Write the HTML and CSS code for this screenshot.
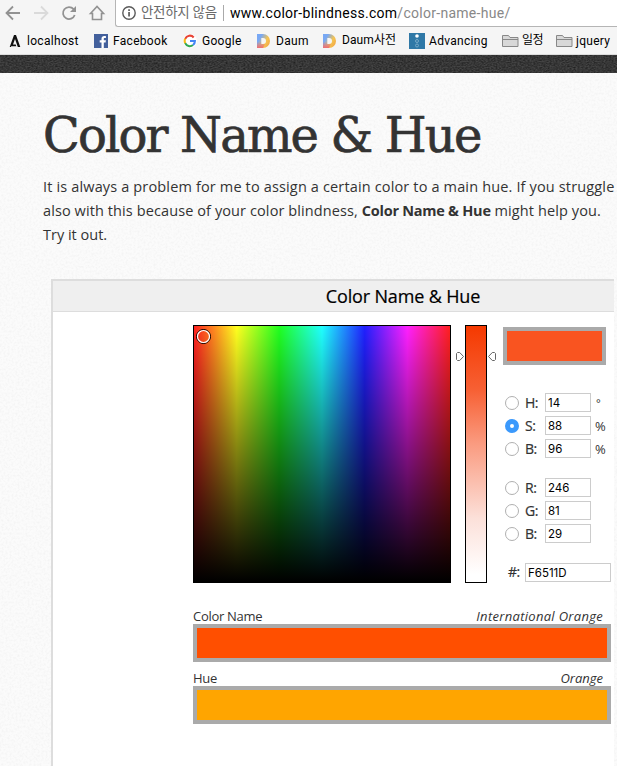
FILE: index.html
```html
<!DOCTYPE html>
<html lang="en">
<head>
<meta charset="utf-8">
<title>Color Name &amp; Hue</title>
<link rel="stylesheet" href="styles.css">
</head>
<body>
<header class="chrome">
  <div class="toolbar">
    <svg class="nav" width="112" height="27" viewBox="0 0 112 27" fill="none" stroke-width="1.8">
      <path d="M20 13H7M13 6.500 6.500 13l6.500 6.500" stroke="#929292"/>
      <path d="M34 13h13M41 6.500 47.500 13 41 19.500" stroke="#dadada"/>
      <path d="M73.600 9.200A6 6 0 1 0 74.700 15" stroke="#929292"/>
      <path d="M76 6v6h-6z" fill="#929292"/>
      <path d="M90.500 13.500 97 6.500l6.500 7h-2v6H92.500v-6z" stroke="#929292" stroke-width="1.600"/>
    </svg>
    <div class="address">
      <svg class="info" width="14" height="14" viewBox="0 0 14 14"><circle cx="7" cy="7" r="6.200" fill="none" stroke="#5a5a5a" stroke-width="1.400"/><path d="M6.200 6h1.700v4.500H6.200zM6.200 3.300h1.700V5H6.200z" fill="#5a5a5a"/></svg>
      <span class="insecure">안전하지 않음</span>
      <span class="divider"></span>
      <span class="url">www.color-blindness.com<span class="path">/color-name-hue/</span></span>
    </div>
  </div>
  <nav class="bookmarks">
    <a class="bm bm-local"><svg width="12" height="14" viewBox="0 0 12 14"><path d="M5 1h2l4.300 12H8.800L6 5 4 10.500h2.700l.6 1.700H2.200l-.3.800H.7z" fill="#111"/></svg><span>localhost</span></a>
    <a class="bm bm-fb"><svg width="14" height="14" viewBox="0 0 14 14"><path d="M0 0h14v14H0z" fill="#43609c"/><path d="M7.500 14V8.500H5.700V6.300h1.800V4.700C7.500 2.800 8.600 2 10.200 2h1.700v2h-1.100c-.8 0-1 .4-1 1v1.300h2.100l-.3 2.200H9.800V14z" fill="#fff"/></svg><span>Facebook</span></a>
    <a class="bm bm-google"><svg width="14" height="14" viewBox="0 0 14 14"><circle cx="7" cy="7" r="7" fill="#fff"/><g fill="none" stroke-width="2.100"><path d="M2.200 4.800A5 5 0 0 1 10.700 3.500" stroke="#e84436"/><path d="M2.200 9.200a5 5 0 0 1 0-4.400" stroke="#f6ba15"/><path d="M10 11A5 5 0 0 1 2.200 9.200" stroke="#34a853"/><path d="M7 7h4.900a5 5 0 0 1-1.900 4" stroke="#4285f4"/></g></svg><span>Google</span></a>
    <a class="bm bm-daum"><svg width="14" height="14" viewBox="0 0 14 14"><defs><linearGradient id="dg" x1="0" x2="1" y1=".2" y2=".8"><stop offset=".2" stop-color="#78a8f4"/><stop offset=".65" stop-color="#f5c451"/><stop offset="1" stop-color="#f2a543"/></linearGradient><linearGradient id="dr" x1="0" x2="0" y1="0" y2="1"><stop offset=".55" stop-color="#ee6c73" stop-opacity="0"/><stop offset="1" stop-color="#ee6c73"/></linearGradient></defs><path d="M0 0h6a7 7 0 0 1 0 14H0zM4.300 4v6H6a3 3 0 0 0 0-6z" fill="url(#dg)" fill-rule="evenodd"/><path d="M0 0h4.300v10H8l-2 4H0z" fill="url(#dr)"/></svg><span>Daum</span></a>
    <a class="bm bm-dict"><svg width="14" height="14" viewBox="0 0 14 14"><path d="M0 0h6a7 7 0 0 1 0 14H0zM4.300 4v6H6a3 3 0 0 0 0-6z" fill="url(#dg)" fill-rule="evenodd"/><path d="M0 0h4.300v10H8l-2 4H0z" fill="url(#dr)"/></svg><span>Daum사전</span></a>
    <a class="bm bm-adv"><svg width="16" height="16" viewBox="0 0 16 16"><path d="M0 0h16v16H0z" fill="#2f78a6"/><circle cx="8" cy="3" r="1.800" fill="#fff"/><g fill="none" stroke="#77a9c7"><circle cx="8" cy="8" r="1.500"/><circle cx="8" cy="12.500" r="1.500"/></g></svg><span>Advancing</span></a>
    <a class="bm bm-folder1"><svg width="17" height="14" viewBox="0 0 17 14"><path d="M.5 12.500v-11h6l1.500 2h8v9zM.5 5.500h15.500" fill="#d8d8d8" stroke="#888"/></svg><span>일정</span></a>
    <a class="bm bm-folder2"><svg width="17" height="14" viewBox="0 0 17 14"><path d="M.5 12.500v-11h6l1.500 2h8v9zM.5 5.500h15.500" fill="#d8d8d8" stroke="#888"/></svg><span>jquery</span></a>
  </nav>
</header>
<div class="band"><svg class="texture" width="617" height="18"><filter id="dark" x="0" y="0" width="1" height="1"><feTurbulence type="fractalNoise" baseFrequency=".5 .8" numOctaves="2" seed="4"/><feColorMatrix values="0 0 0 0 0  0 0 0 0 0  0 0 0 0 0  .9 0 0 0 -.25"/></filter><rect width="617" height="18" filter="url(#dark)"/></svg></div>
<main class="page">
  <svg class="texture" width="617" height="693"><filter id="paper" x="0" y="0" width="1" height="1"><feTurbulence type="fractalNoise" baseFrequency=".5 .45" numOctaves="2" seed="8"/><feColorMatrix values="0 0 0 0 .4  0 0 0 0 .4  0 0 0 0 .4  .2 0 0 0 -.08"/></filter><rect width="617" height="693" filter="url(#paper)"/></svg>
  <h1>Color Name &amp; Hue</h1>
  <p class="intro"><span class="l1">It is always a problem for me to assign a certain color to a main hue. If you struggle</span><br><span class="l2">also with this because of your color blindness, <b>Color Name &amp; Hue</b> might help you.</span><br><span class="l3">Try it out.</span></p>
  <section class="panel">
    <h2><span>Color Name &amp; Hue</span></h2>
    <div class="tool">
      <div class="picker">
        <div class="field"><svg class="cursor" width="15" height="15" viewBox="0 0 15 15" fill="none"><circle cx="7.500" cy="7.500" r="7" stroke="#000"/><circle cx="7.500" cy="7.500" r="6" stroke="#fff" stroke-width="1.200"/></svg></div>
        <div class="slider">
          <svg class="arrow left" width="8" height="9" viewBox="0 0 8 9"><path d="M1.500.5h2.200l3.800 4-3.800 4H1.500L.5 7.500v-6z" fill="#fff" stroke="#666"/></svg>
          <svg class="arrow right" width="8" height="9" viewBox="0 0 8 9"><path d="M6.500.5H4.300l-3.800 4 3.800 4h2.200l1-1v-6z" fill="#fff" stroke="#666"/></svg>
        </div>
        <div class="values">
          <div class="preview"></div>
          <div class="group">
            <label class="row"><i class="radio"></i><span class="name">H:</span><span class="box">14</span><span class="unit degree">°</span></label>
            <label class="row"><i class="radio on"></i><span class="name">S:</span><span class="box">88</span><span class="unit">%</span></label>
            <label class="row"><i class="radio"></i><span class="name">B:</span><span class="box">96</span><span class="unit">%</span></label>
          </div>
          <div class="group">
            <label class="row"><i class="radio"></i><span class="name">R:</span><span class="box">246</span></label>
            <label class="row"><i class="radio"></i><span class="name">G:</span><span class="box">81</span></label>
            <label class="row"><i class="radio"></i><span class="name">B:</span><span class="box">29</span></label>
          </div>
          <div class="hex"><span class="name">#:</span><span class="box">F6511D</span></div>
        </div>
      </div>
      <div class="result"><div class="caption"><span class="cn">Color Name</span><em class="io">International Orange</em></div><div class="bar name-bar"></div></div>
      <div class="result"><div class="caption"><span class="cn">Hue</span><em>Orange</em></div><div class="bar hue-bar"></div></div>
    </div>
  </section>
</main>
</body>
</html>
```
FILE: styles.css
```css
* { box-sizing: border-box; }
body { margin: 0; width: 617px; height: 766px; overflow: hidden; background: #fbfbfb; color: #333; font-family: "Open Sans", "Noto Sans CJK KR", sans-serif; }
svg { display: block; flex: none; }
.chrome { height: 55px; background: #f5f5f5; border-bottom: 1px solid #ddd; color: #000; font-family: Roboto, "Noto Sans CJK KR", sans-serif; white-space: nowrap; }
.toolbar { display: flex; height: 27px; }
.address { display: flex; align-items: center; flex: 1; margin-left: 3px; height: 27px; padding-left: 6px; background: #fff; border: 1px solid #b5b5b5; border-width: 0 0 1px 1px; border-radius: 0 0 0 3px; }
.insecure { margin-left: 5px; width: 77px; font-size: 13.500px; line-height: 20px; margin-top: -2px; letter-spacing: -.3px; color: #6a6a6a; }
.divider { width: 1px; height: 16px; margin: 0 6px 0 5px; background: #aaa; }
.url { font-size: 14px; letter-spacing: .28px; }
.path { color: #888; }
.bookmarks { display: flex; height: 27px; padding-left: 9px; }
.bm { display: flex; align-items: center; gap: 6px; font-size: 12px; letter-spacing: .3px; }
.bm span { height: 16px; line-height: 16px; }
.bm-local { width: 85px; }
.bm-fb { width: 89px; gap: 5px; }
.bm-google { width: 74px; gap: 5px; }
.bm-daum { width: 66px; gap: 5px; }
.bm-dict { width: 86px; gap: 5px; }
.bm-dict span { letter-spacing: .1px; margin-top: -2px; }
.bm-adv { width: 93px; gap: 4px; }
.bm-folder1 { width: 54px; gap: 3px; }
.bm-folder1 span { margin-top: -2px; letter-spacing: -.5px; }
.bm-folder2 { gap: 3px; }
.band { position: relative; height: 18px; background: #444; }
.texture { position: absolute; top: 0; left: 0; }
.page { position: relative; height: 693px; padding: 31px 0 0 43px; }
h1, .intro, .panel { position: relative; }
h1 { margin: 0; height: 61px; font: 400 48px/62px "DejaVu Serif", serif; letter-spacing: -1.850px; white-space: nowrap; -webkit-text-stroke: .7px #333; }
.intro { margin: 10px 0 0; font-size: 14.500px; line-height: 24px; white-space: nowrap; }
.l1 { letter-spacing: .15px; }
.l2 { letter-spacing: .1px; }
.l2 b { letter-spacing: -.250px; }
.panel { margin: 32px 0 0 8px; width: 563px; height: 500px; overflow: hidden; background: #fff; border: 2px solid #ddd; border-right: 0; }
h2 { margin: 0; width: 700px; height: 31px; background: #efefef; border-bottom: 1px solid #ddd; color: #000; font-size: 18px; font-weight: 400; line-height: 30px; letter-spacing: -.150px; text-align: center; -webkit-text-stroke: .2px #000; }
.tool { width: 418px; margin: 13px 0 0 140px; }
.picker { display: flex; height: 258px; }
.field { position: relative; width: 258px; border: 1px solid #000; background: linear-gradient(transparent, #000), linear-gradient(90deg, #ff2020, #ffff20 16.667%, #20ff20 33.333%, #20ffff 50%, #2020ff 66.667%, #ff20ff 83.333%, #ff2020); }
.cursor { position: absolute; left: 2px; top: 3px; }
.slider { position: relative; width: 22px; margin-left: 14px; border: 1px solid #000; background: linear-gradient(#f53900, #f76034 25%, #fa9b80 46%, #fce0d9 75%, #fff 97%); }
.arrow { position: absolute; top: 26px; }
.arrow.left { left: -10px; }
.arrow.right { left: 22px; }
.values { display: flex; flex-direction: column; width: 108px; margin-left: 16px; padding-top: 2px; }
.preview { width: 103px; height: 38px; border: 4px solid #aaa; background: #f95420; }
.group { display: flex; flex-direction: column; gap: 4px; margin-top: 28px; }
.group + .group { margin-top: 20px; }
.row { display: flex; align-items: center; height: 19px; padding-left: 2px; font-size: 14px; }
.radio { width: 14px; height: 14px; border: 1px solid #b0b0b0; border-radius: 50%; background: #fff; }
.radio.on { border: 5px solid #3b99fc; }
.name { width: 20px; margin-left: 6px; font-size: 14px; line-height: 18px; letter-spacing: -.5px; -webkit-text-stroke: .2px #333; }
.box { width: 46px; height: 19px; padding-left: 2px; border: 1px solid #ccc; background: #fff; color: #000; font: 11.500px/18px Inter, sans-serif; }
.unit { margin-left: 4px; font-size: 13px; line-height: 18px; }
.unit.degree { margin-left: 5px; font-size: 11px; }
.hex { display: flex; margin-top: 20px; }
.hex .name { width: 17px; margin-left: 5px; }
.hex .box { width: 86px; }
.result { height: 62px; }
.picker + .result { margin-top: 24px; }
.caption { display: flex; justify-content: space-between; height: 17px; padding-right: 8px; font-size: 13px; line-height: 18px; white-space: nowrap; }
.cn { letter-spacing: -.3px; }
.io { letter-spacing: .3px; }
.bar { height: 38px; border: 4px solid #aaa; }
.name-bar { background: #ff4f00; }
.hue-bar { background: #ffa500; }
```
